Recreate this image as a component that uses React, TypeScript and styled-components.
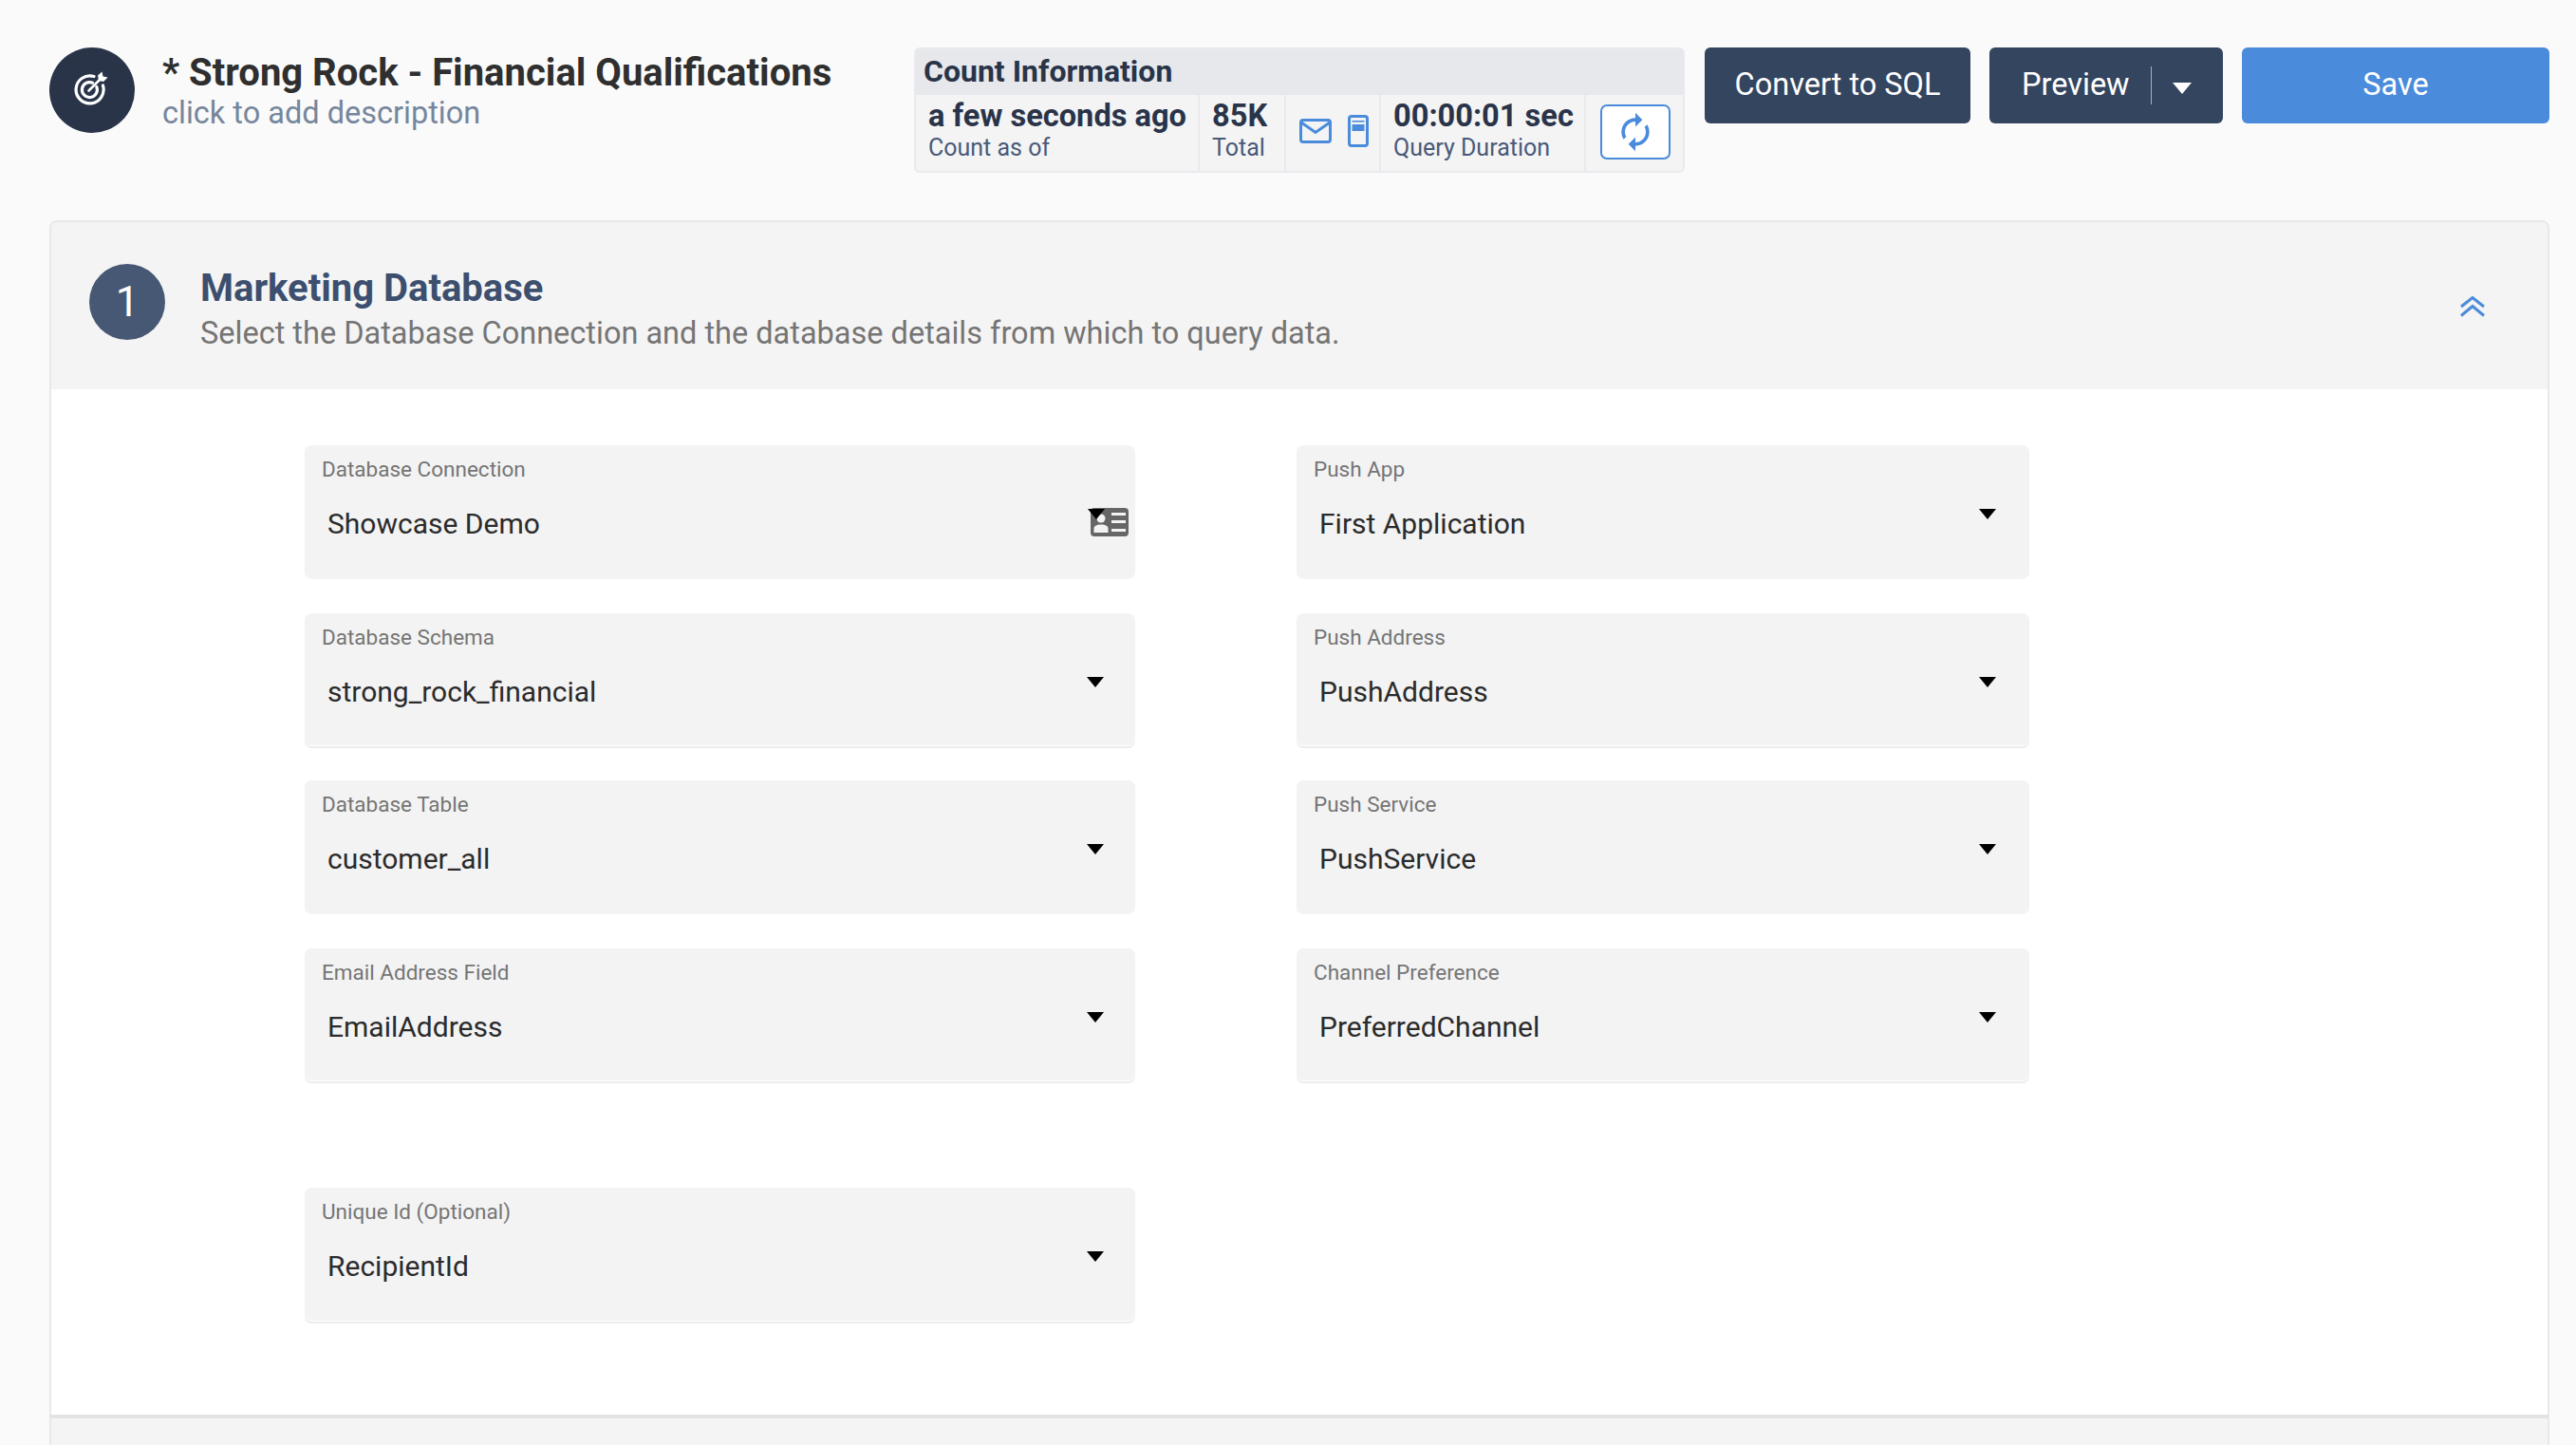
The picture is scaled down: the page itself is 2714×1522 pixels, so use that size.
import React from 'react';
import styled, { createGlobalStyle } from 'styled-components';

const Global = createGlobalStyle`
  html, body { margin: 0; padding: 0; background: #fafafa; }
  body { font-family: Roboto, "Liberation Sans", sans-serif; height: 1522px; overflow: hidden; }
  * { box-sizing: border-box; }
`;

const Page = styled.div`
  height: 1522px;
  padding: 50px 28px 0 52px;
  overflow: hidden;
`;
const Header = styled.header`
  display: flex;
  align-items: flex-start;
  height: 182px;
`;
const TitleBlock = styled.div`
  display: flex;
  gap: 29px;
  width: 911px;
`;
const Avatar = styled.div`
  width: 90px;
  height: 90px;
  border-radius: 50%;
  background: #2a3449;
  display: flex;
  align-items: center;
  justify-content: center;
  flex: none;
`;
const TitleText = styled.div`
  display: flex;
  flex-direction: column;
  padding-top: 2px;
`;
const Title = styled.div`
  font-size: 40px;
  line-height: 50px;
  font-weight: 700;
  color: #2f2f2f;
`;
const Desc = styled.div`
  font-size: 32.5px;
  line-height: 35px;
  color: #76869c;
`;
const CountBox = styled.section`
  width: 812px;
  height: 132px;
  border: 2px solid #e9e9ee;
  border-radius: 6px;
  background: #f4f4f5;
  flex: none;
`;
const CountHead = styled.div`
  height: 48px;
  background: #e7e8ec;
  color: #2a3449;
  font-size: 32px;
  font-weight: 700;
  line-height: 46px;
  padding-left: 8px;
`;
const CountGrid = styled.div`
  display: grid;
  grid-template-columns: 299px 91px 100px 216px 1fr;
  height: 80px;
`;
const Cell = styled.div`
  border-right: 2px solid #e9e9ee;
  padding: 2px 0 0 13px;
  &:last-child { border-right: none; }
`;
const IconCell = styled(Cell)`
  display: flex;
  gap: 17px;
  align-items: center;
  padding: 0 0 4px 14px;
`;
const RefreshCell = styled(Cell)`
  padding: 10px 0 0 15px;
`;
const BigText = styled.div`
  font-size: 32.6px;
  line-height: 40px;
  font-weight: 700;
  color: #2a3449;
`;
const SmallText = styled.div`
  font-size: 25px;
  line-height: 28px;
  color: #4a5a78;
`;
const RefreshButton = styled.button`
  width: 74px;
  height: 58px;
  background: #fff;
  border: 2px solid #4a8bdb;
  border-radius: 7px;
  padding: 0;
  display: flex;
  align-items: center;
  justify-content: center;
`;
const Actions = styled.div`
  display: flex;
  gap: 20px;
  margin-left: 21px;
`;
const Button = styled.button<{ $w: number; $primary?: boolean }>`
  width: ${(p) => p.$w}px;
  height: 80px;
  border: none;
  border-radius: 6px;
  background: ${(p) => (p.$primary ? '#4a8bdb' : '#34455f')};
  color: #fff;
  font-family: inherit;
  font-size: 32.5px;
  font-weight: 400;
  padding: 0 0 2px;
  display: flex;
  align-items: center;
  justify-content: center;
`;
const PreviewLabel = styled.span`
  width: 171px;
  height: 40px;
  margin-top: 2px;
  padding-left: 34px;
  line-height: 38px;
  text-align: left;
  border-right: 1.5px solid #a9b2c0;
`;
const PreviewCaret = styled.span`
  flex: 1;
  display: flex;
  justify-content: center;
  padding: 7px 12px 0 0;
`;
const Panel = styled.section`
  border: 2px solid #e8e8e8;
  border-bottom: none;
  border-radius: 8px 8px 0 0;
  background: #fff;
  height: 1258px;
`;
const PanelHead = styled.div`
  height: 176px;
  background: #f4f4f4;
  display: flex;
  align-items: flex-start;
  padding: 44px 0 0 40px;
  gap: 37px;
  border-radius: 6px 6px 0 0;
`;
const StepNo = styled.div`
  width: 80px;
  height: 80px;
  border-radius: 50%;
  background: #475874;
  color: #fff;
  font-size: 44px;
  display: flex;
  align-items: center;
  justify-content: center;
  flex: none;
`;
const PanelText = styled.div`
  flex: 1;
`;
const PanelTitle = styled.div`
  font-size: 40px;
  line-height: 51px;
  font-weight: 700;
  color: #3d4f6f;
`;
const PanelSub = styled.div`
  font-size: 32.5px;
  line-height: 44px;
  color: #757575;
`;
const Collapse = styled.div`
  padding: 34px 66px 0 0;
`;
const FieldGrid = styled.div<{ $top: number }>`
  display: grid;
  grid-template-columns: 875px 772px;
  grid-auto-rows: 139.5px;
  column-gap: 170px;
  row-gap: 37px;
  padding: ${(p) => p.$top}px 0 0 267px;
`;
const Field = styled.div<{ $line?: boolean }>`
  position: relative;
  background: #f3f3f3;
  border-radius: 7px;
  padding: 10px 0 0 18px;
  box-shadow: ${(p) => (p.$line ? '0 1px 0 #fff, 0 3px 0 #ececec' : '0 1px 1px #f6f6f6')};
`;
const FieldLabel = styled.div`
  font-size: 22.5px;
  line-height: 30px;
  color: #757575;
`;
const FieldValue = styled.div`
  font-size: 30px;
  line-height: 40px;
  color: #2b2b2b;
  margin: 23px 0 0 6px;
`;
const Caret = styled.span<{ $right: number }>`
  position: absolute;
  top: 67px;
  right: ${(p) => p.$right}px;
  width: 0;
  height: 0;
  border-left: 9px solid transparent;
  border-right: 9px solid transparent;
  border-top: 11px solid #000;
  z-index: 1;
`;
const CardIcon = styled.svg`
  position: absolute;
  top: 66px;
  right: 7px;
`;
const TargetSvg = styled.svg`
  margin: 0 3px 5px 0;
`;
const Next = styled.div`
  height: 60px;
  background: #f4f4f4;
  border-top: 4px solid #e3e3e3;
  border-left: 2px solid #e8e8e8;
  border-right: 2px solid #e8e8e8;
`;

const TargetIcon = () => (
  <TargetSvg width="36" height="36" viewBox="0 0 36 36" fill="none" stroke="#fff">
    <path d="M21 5.6A14.5 14.5 0 1 0 30.4 15" strokeWidth="3.2" strokeLinecap="round" />
    <path d="M19.5 12.2A8 8 0 1 0 23.8 16.5" strokeWidth="3.2" strokeLinecap="round" />
    <path d="M15.5 20.5L28 8" strokeWidth="2.6" strokeLinecap="round" />
    <path d="M25 4.5L29.5 0.5L30.5 5.5L35.5 6.5L31 11L26 10Z" fill="#fff" stroke="none" />
  </TargetSvg>
);
const MailIcon = () => (
  <svg width="34" height="26" viewBox="0 0 34 26" fill="none" stroke="#4a8bdb" strokeWidth="3">
    <rect x="1.5" y="1.5" width="31" height="23" rx="2.5" />
    <path d="M2 4L17 14.5L32 4" />
  </svg>
);
const PhoneIcon = () => (
  <svg width="22" height="34" viewBox="0 0 22 34">
    <rect x="1.5" y="1.5" width="19" height="31" rx="2.5" fill="#f4f4f5" stroke="#4a8bdb" strokeWidth="3" />
    <rect x="4.5" y="6" width="13" height="1.6" fill="#4a8bdb" />
    <rect x="4.5" y="10" width="13" height="7" fill="#4a8bdb" />
  </svg>
);
const SyncIcon = () => (
  <svg width="44" height="44" viewBox="0 0 24 24" fill="#4a8bdb" style={{ transform: 'scaleX(-1)' }}>
    <path d="M12 4V1L8 5l4 4V6c3.31 0 6 2.69 6 6 0 1.01-.25 1.97-.7 2.8l1.46 1.46C19.54 15.03 20 13.57 20 12c0-4.42-3.58-8-8-8zm0 14c-3.31 0-6-2.69-6-6 0-1.01.25-1.97.7-2.8L5.24 7.74C4.46 8.97 4 10.43 4 12c0 4.42 3.58 8 8 8v3l4-4-4-4v3z" />
  </svg>
);
const WhiteCaret = () => (
  <svg width="20" height="12" viewBox="0 0 20 12"><path d="M0 0H20L10 12Z" fill="#fff" /></svg>
);
const DoubleUp = () => (
  <svg width="26" height="22" viewBox="0 0 26 22" fill="none" stroke="#4a8bdb" strokeWidth="3">
    <path d="M1 11L13 1.500L25 11" />
    <path d="M1 20.500L13 10.500L25 20.500" />
  </svg>
);
const AddressCard = () => (
  <CardIcon width="40" height="30" viewBox="0 0 40 30">
    <rect width="40" height="30" rx="4" fill="#666" />
    <circle cx="11" cy="11" r="4.500" fill="#f3f3f3" />
    <path d="M3.500 26V22C3.500 19 6 17.500 11 17.500S18.500 19 18.500 22V26Z" fill="#f3f3f3" />
    <rect x="22" y="5" width="15" height="3" fill="#f3f3f3" />
    <rect x="22" y="13" width="15" height="3" fill="#f3f3f3" />
    <rect x="22" y="22" width="15" height="3" fill="#f3f3f3" />
  </CardIcon>
);

type FieldDef = { label: string; value: string; line?: boolean; card?: boolean; right: number };
const fields: FieldDef[] = [
  { label: 'Database Connection', value: 'Showcase Demo', card: true, right: 32 },
  { label: 'Push App', value: 'First Application', right: 35 },
  { label: 'Database Schema', value: 'strong_rock_financial', line: true, right: 33 },
  { label: 'Push Address', value: 'PushAddress', line: true, right: 35 },
  { label: 'Database Table', value: 'customer_all', right: 33 },
  { label: 'Push Service', value: 'PushService', right: 35 },
  { label: 'Email Address Field', value: 'EmailAddress', line: true, right: 33 },
  { label: 'Channel Preference', value: 'PreferredChannel', line: true, right: 35 },
];

const FieldBox = ({ f }: { f: FieldDef }) => (
  <Field $line={f.line}>
    <FieldLabel>{f.label}</FieldLabel>
    <FieldValue>{f.value}</FieldValue>
    <Caret $right={f.right} />
    {f.card && <AddressCard />}
  </Field>
);

export default function App() {
  return (
    <Page>
      <Global />
      <Header>
        <TitleBlock>
          <Avatar><TargetIcon /></Avatar>
          <TitleText>
            <Title>* Strong Rock - Financial Qualifications</Title>
            <Desc>click to add description</Desc>
          </TitleText>
        </TitleBlock>
        <CountBox>
          <CountHead>Count Information</CountHead>
          <CountGrid>
            <Cell>
              <BigText>a few seconds ago</BigText>
              <SmallText>Count as of</SmallText>
            </Cell>
            <Cell>
              <BigText>85K</BigText>
              <SmallText>Total</SmallText>
            </Cell>
            <IconCell><MailIcon /><PhoneIcon /></IconCell>
            <Cell>
              <BigText>00:00:01 sec</BigText>
              <SmallText>Query Duration</SmallText>
            </Cell>
            <RefreshCell>
              <RefreshButton><SyncIcon /></RefreshButton>
            </RefreshCell>
          </CountGrid>
        </CountBox>
        <Actions>
          <Button $w={280}>Convert to SQL</Button>
          <Button $w={246}>
            <PreviewLabel>Preview</PreviewLabel>
            <PreviewCaret><WhiteCaret /></PreviewCaret>
          </Button>
          <Button $w={324} $primary>Save</Button>
        </Actions>
      </Header>
      <Panel>
        <PanelHead>
          <StepNo>1</StepNo>
          <PanelText>
            <PanelTitle>Marketing Database</PanelTitle>
            <PanelSub>Select the Database Connection and the database details from which to query data.</PanelSub>
          </PanelText>
          <Collapse><DoubleUp /></Collapse>
        </PanelHead>
        <FieldGrid $top={59}>
          {fields.map((f) => <FieldBox key={f.label} f={f} />)}
        </FieldGrid>
        <FieldGrid $top={113}>
          <FieldBox f={{ label: 'Unique Id (Optional)', value: 'RecipientId', line: true, right: 33 }} />
        </FieldGrid>
      </Panel>
      <Next />
    </Page>
  );
}
